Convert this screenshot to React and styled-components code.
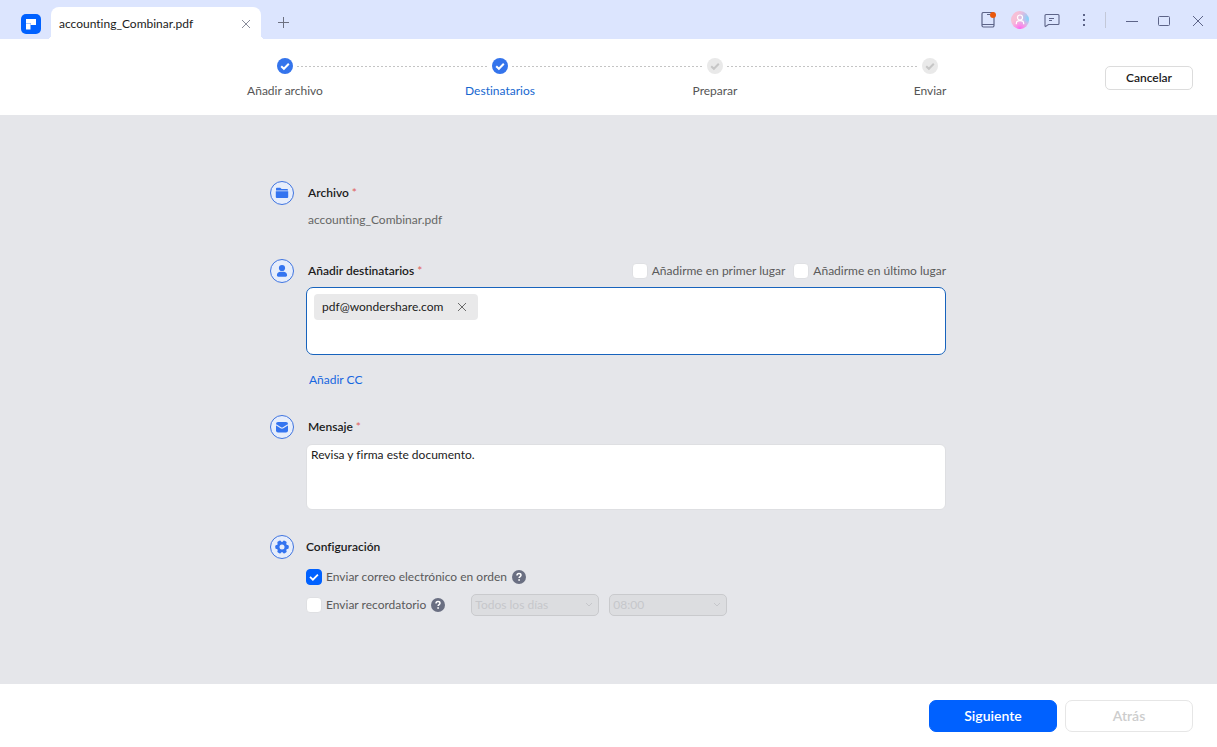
import React, { useState } from "react";
import styled, { createGlobalStyle, css } from "styled-components";

const GlobalStyle = createGlobalStyle`
  *, *::before, *::after { box-sizing: border-box; }
  body {
    margin: 0;
    font-family: Lato, "Open Sans", sans-serif;
    font-size: 12px;
    font-variant-ligatures: none;
    line-height: 18px;
    color: #1b1b1b;
  }
  button, input, textarea, select { font: inherit; font-variant-ligatures: none; color: inherit; }
  svg { display: block; }
`;

const Page = styled.div`
  min-height: 100vh;
  display: flex;
  flex-direction: column;
  background: #e5e6ea;
`;

/* ---------- title bar ---------- */

const TitleBar = styled.header`
  display: flex;
  align-items: flex-end;
  height: 39px;
  padding-left: 21px;
  padding-right: 4px;
  background: #dce5fe;
`;

const Logo = styled.svg`
  flex: none;
  width: 20px;
  height: 20px;
  margin: 0 10px 5px 0;
`;

const Tab = styled.div`
  position: relative;
  display: flex;
  align-items: center;
  justify-content: space-between;
  width: 210px;
  height: 32px;
  padding: 1px 10px 0 8px;
  border-radius: 8px 8px 0 0;
  background: #fff;

  &::before,
  &::after {
    content: "";
    position: absolute;
    bottom: 0;
    width: 4px;
    height: 4px;
  }
  &::before {
    right: 100%;
    background: radial-gradient(circle at 0 0, transparent 4px, #fff 4px);
  }
  &::after {
    left: 100%;
    background: radial-gradient(circle at 100% 0, transparent 4px, #fff 4px);
  }
`;

const PlainButton = styled.button`
  display: grid;
  place-items: center;
  padding: 0;
  border: 0;
  background: none;
  cursor: pointer;
`;

const TabClose = styled(PlainButton)`
  width: 10px;
  height: 10px;
  color: #8a8d9a;
`;

const NewTab = styled(PlainButton)`
  width: 24px;
  height: 32px;
  margin-left: 10px;
  color: #6c7080;
`;

const WindowTools = styled.div`
  display: flex;
  align-items: center;
  height: 38px;
  margin-left: auto;
  color: #5d6488;
`;

const ToolButton = styled(PlainButton)`
  width: 32px;
  height: 32px;
`;

const Divider = styled.span`
  width: 1px;
  height: 16px;
  margin: 0 11px 0 5px;
  background: #c3c8d8;
`;

/* ---------- stepper ---------- */

const StepBar = styled.nav`
  display: grid;
  grid-template-columns: 1fr auto 1fr;
  height: 76px;
  padding: 0 24px 0 22px;
  background: #fff;
`;

const Steps = styled.ol`
  grid-column: 2;
  display: flex;
  margin: 0;
  padding: 19px 0 0;
  list-style: none;
`;

const Step = styled.li`
  display: flex;
  flex-direction: column;
  align-items: center;
  gap: 8px;
  width: 80px;
  white-space: nowrap;
  color: ${(p) => (p.$current ? "#1767cf" : "#555")};
`;

const StepLine = styled.li`
  width: 191px;
  height: 1px;
  margin: 8px -28px 0;
  background: repeating-linear-gradient(90deg, #c4c4c4 0 2px, transparent 2px 4px);
`;

const CancelButton = styled.button`
  justify-self: end;
  width: 88px;
  height: 24px;
  margin-top: 27px;
  padding: 0;
  border: 1px solid #dcdcdc;
  border-radius: 5px;
  background: #fff;
  font-weight: 600;
`;

/* ---------- form ---------- */

const Main = styled.main`
  flex: 1;
  padding: 66px 25px 40px 24px;
`;

const Form = styled.form`
  max-width: 676px;
  margin: 0 auto;
`;

const Section = styled.section`
  display: grid;
  grid-template-columns: 24px minmax(0, 1fr);
  column-gap: 12px;
  margin-bottom: ${(p) => p.$space || 0}px;
`;

const Badge = styled.span`
  display: grid;
  place-items: center;
  width: 24px;
  height: 24px;
  border: 1px solid #3f74e0;
  border-radius: 50%;
  background: #e6edfb;
  color: #3474f0;
`;

const SectionHead = styled.div`
  display: flex;
  align-items: center;
  justify-content: space-between;
  height: 24px;
  padding-left: ${(p) => (p.$flush ? 0 : 2)}px;
`;

const Title = styled.h2`
  margin: 0;
  font-size: 12px;
  font-weight: 600;
`;

const Required = styled.span`
  font-weight: 400;
  color: #e0605c;
`;

const FileName = styled.p`
  margin: 6px 0 0 2px;
  color: #666;
`;

const CheckGroup = styled.div`
  display: flex;
  gap: 8px;
`;

const CheckLabel = styled.label`
  display: flex;
  align-items: center;
  gap: 4px;
  color: #5a5a5a;
`;

const CheckBox = styled.span`
  display: grid;
  place-items: center;
  width: 16px;
  height: 16px;

  > * { grid-area: 1 / 1; }
  svg { pointer-events: none; }
`;

const CheckInput = styled.input`
  appearance: none;
  width: 16px;
  height: 16px;
  margin: 0;
  border: 1px solid #dfe0e3;
  border-radius: 4px;
  background: #fff;

  &:checked {
    border-color: #0061ff;
    background: #0061ff;
  }
`;

const fieldBox = css`
  display: block;
  width: 100%;
  background: #fff;
`;

const RecipientBox = styled.div`
  ${fieldBox}
  display: flex;
  align-items: flex-start;
  height: 68px;
  margin-top: 4px;
  padding: 6px 7px;
  border: 1px solid #1763bd;
  border-radius: 7px;
`;

const Chip = styled.span`
  display: flex;
  align-items: center;
  gap: 14px;
  height: 26px;
  padding: 0 11px 0 8px;
  border-radius: 4px;
  background: #e9e9ea;
`;

const ChipClose = styled(PlainButton)`
  width: 10px;
  height: 10px;
  color: #6a6a6a;
`;

const RecipientInput = styled.input`
  flex: 1;
  min-width: 0;
  height: 26px;
  border: 0;
  outline: 0;
  background: none;
`;

const TextLink = styled.a`
  display: inline-block;
  margin: 16px 0 0 3px;
  color: #1767e0;
  text-decoration: none;
`;

const Message = styled.textarea`
  ${fieldBox}
  height: 66px;
  margin-top: 5px;
  padding: 1px 4px;
  border: 1px solid #dedfe2;
  border-radius: 6px;
  outline: 0;
  resize: none;
`;

const Option = styled.div`
  display: flex;
  align-items: center;
  height: 22px;
  margin-top: ${(p) => (p.$first ? 7 : 6)}px;
`;

const HelpButton = styled(PlainButton)`
  width: 14px;
  height: 14px;
  margin-left: 5px;
`;

const Selects = styled.div`
  display: flex;
  gap: 10px;
  margin-left: 26px;
`;

const SelectWrap = styled.div`
  display: grid;
  align-items: center;
  width: ${(p) => p.$width}px;
  color: #c6c7cb;

  > * { grid-area: 1 / 1; }
  svg { justify-self: end; margin-right: 6px; pointer-events: none; }
`;

const Select = styled.select`
  appearance: none;
  width: 100%;
  height: 22px;
  padding: 0 20px 0 3px;
  border: 1px solid #c9cacd;
  border-radius: 5px;
  background: #dcdde0;
  line-height: 18px;
  opacity: 1;
`;

/* ---------- footer ---------- */

const Footer = styled.footer`
  display: flex;
  justify-content: flex-end;
  gap: 8px;
  padding: 16px 24px 15px;
  background: #fff;
`;

const FooterButton = styled.button`
  width: 128px;
  height: 32px;
  padding: 0;
  border: 1px solid ${(p) => (p.$primary ? "#0061ff" : "#e6e6e6")};
  border-radius: 7px;
  background: ${(p) => (p.$primary ? "#0061ff" : "#fff")};
  color: ${(p) => (p.$primary ? "#fff" : "#cdcdcd")};
  font-size: 14px;
  font-weight: 600;
`;

/* ---------- drawings ---------- */

const Cross = () => (
  <svg width="10" height="10" viewBox="0 0 10 10" fill="none" stroke="currentColor">
    <path d="M1 1l8 8M9 1L1 9" />
  </svg>
);

const StepMark = ({ done }) => (
  <svg width="16" height="16" viewBox="0 0 16 16" fill="none">
    <circle cx="8" cy="8" r="8" fill={done ? "#3474ec" : "#e9e9e9"} />
    <path d="M4.200 8.200l2.700 2.600 4.900-5" stroke={done ? "#fff" : "#c6c6c6"} strokeWidth="2" />
  </svg>
);

const HelpMark = () => (
  <svg width="14" height="14" viewBox="0 0 14 14" fill="none">
    <circle cx="7" cy="7" r="7" fill="#6a6f82" />
    <path d="M5 5.500c0-1.200.9-1.900 2-1.900s2 .7 2 1.700c0 1.300-1.900 1.400-1.900 2.800" stroke="#fff" strokeWidth="1.500" />
    <rect x="6.300" y="9.200" width="1.600" height="1.600" fill="#fff" />
  </svg>
);

const Chevron = () => (
  <svg width="8" height="6" viewBox="0 0 8 6" fill="none" stroke="currentColor">
    <path d="M1 1l3 3 3-3" />
  </svg>
);

const FolderIcon = () => (
  <svg width="14" height="12" viewBox="0 0 14 12" fill="currentColor">
    <path d="M1 3.400V1.600A.9.9 0 0 1 1.900.7h3.300l1.400 1.300h5.500a.9.9 0 0 1 .9.9v.5z" />
    <path d="M.8 4.300h12.400v5.800a.9.9 0 0 1-.9.9H1.700a.9.9 0 0 1-.9-.9z" />
  </svg>
);

const PersonIcon = () => (
  <svg width="12" height="14" viewBox="0 0 12 14" fill="currentColor">
    <circle cx="6" cy="4" r="3.100" />
    <path d="M.9 11.300c0-2 1.600-3.500 3.600-3.500h3c2 0 3.600 1.500 3.600 3.500 0 .8-.6 1.400-1.400 1.400H2.300c-.8 0-1.400-.6-1.400-1.400z" />
  </svg>
);

const MailIcon = () => (
  <svg width="14" height="12" viewBox="0 0 14 12" fill="none">
    <rect x="1" y="1" width="12" height="10.500" rx="2" fill="currentColor" />
    <path d="M1 3.800l4.800 2.900c.8.500 1.600.5 2.400 0L13 3.800" stroke="#e6edfb" strokeWidth="1.100" />
  </svg>
);

const GearIcon = () => {
  const teeth = [0, 60, 120];
  return (
    <svg width="14" height="14" viewBox="0 0 14 14">
      {teeth.map((angle) => (
        <rect key={angle} x="0.300" y="5" width="13.400" height="4" rx="1.200" fill="currentColor" transform={`rotate(${angle} 7 7)`} />
      ))}
      <circle cx="7" cy="7" r="5.300" fill="currentColor" />
      <circle cx="7" cy="7" r="2.500" fill="#e6edfb" />
    </svg>
  );
};

function Check({ label, defaultChecked = false }) {
  const [checked, setChecked] = useState(defaultChecked);
  return (
    <CheckLabel>
      <CheckBox>
        <CheckInput type="checkbox" checked={checked} onChange={(e) => setChecked(e.target.checked)} />
        {checked && (
          <svg width="16" height="16" viewBox="0 0 16 16" fill="none" stroke="#fff" strokeWidth="1.800">
            <path d="M4 7.900l2.900 2.800 5-5.100" />
          </svg>
        )}
      </CheckBox>
      {label}
    </CheckLabel>
  );
}

function Dropdown({ label, value, width }) {
  return (
    <SelectWrap $width={width}>
      <Select aria-label={label} disabled defaultValue={value}>
        <option value={value}>{value}</option>
      </Select>
      <Chevron />
    </SelectWrap>
  );
}

const STEPS = [
  { label: "Añadir archivo", done: true },
  { label: "Destinatarios", done: true, current: true },
  { label: "Preparar" },
  { label: "Enviar" },
];

export default function App() {
  return (
    <Page>
      <GlobalStyle />

      <TitleBar>
        <Logo viewBox="0 0 20 20">
          <rect width="20" height="20" rx="5" fill="#0061ff" />
          <path d="M5 5h10v6H9.500V9H5z" fill="#fff" />
          <path d="M5 10h4.500v5.500H5z" fill="#fff" />
          <path d="M5 9h4.500v1H5z" fill="#a9c8ff" />
        </Logo>
        <Tab>
          <span>accounting_Combinar.pdf</span>
          <TabClose type="button" aria-label="Cerrar pestaña">
            <Cross />
          </TabClose>
        </Tab>
        <NewTab type="button" aria-label="Nueva pestaña">
          <svg width="12" height="12" viewBox="0 0 12 12" fill="none" stroke="currentColor">
            <path d="M6.500 0v11M1 5.500h11" />
          </svg>
        </NewTab>

        <WindowTools>
          <ToolButton type="button" aria-label="Novedades">
            <svg width="16" height="16" viewBox="0 0 16 16" fill="none">
              <path d="M3.500 .500h9a1.500 1.500 0 0 1 1.500 1.500v11.500a1.500 1.500 0 0 1-1.500 1.500h-9A1.500 1.500 0 0 1 2 13.500V2A1.500 1.500 0 0 1 3.500 .500zM2 12.500h12" stroke="currentColor" strokeWidth="1.200" />
              <path d="M7 2.500h3" stroke="currentColor" />
              <circle cx="13" cy="3" r="3" fill="#ea580c" />
            </svg>
          </ToolButton>
          <ToolButton type="button" aria-label="Cuenta">
            <svg width="18" height="18" viewBox="0 0 18 18" fill="none">
              <defs>
                <radialGradient id="sky" cx="1" cy="0.400" r="0.700">
                  <stop offset="0" stopColor="#6fdcff" />
                  <stop offset="1" stopColor="#c9a9f5" stopOpacity="0" />
                </radialGradient>
                <radialGradient id="rose" cx="0.500" cy="1" r="0.600">
                  <stop offset="0" stopColor="#ff5cf5" />
                  <stop offset="1" stopColor="#f59fe6" stopOpacity="0" />
                </radialGradient>
              </defs>
              <circle cx="9" cy="9" r="9" fill="#f7bfd6" />
              <circle cx="9" cy="9" r="9" fill="url(#sky)" />
              <circle cx="9" cy="9" r="9" fill="url(#rose)" />
              <circle cx="9" cy="6.500" r="2.500" stroke="#fff" strokeWidth="1.200" />
              <path d="M5.300 13.300v-.8c0-1.500 1.600-2.800 3.700-2.800s3.700 1.300 3.700 2.800v.8" stroke="#fff" strokeWidth="1.200" />
            </svg>
          </ToolButton>
          <ToolButton type="button" aria-label="Comentarios">
            <svg width="16" height="16" viewBox="0 0 16 16" fill="none" stroke="currentColor" strokeWidth="1.100">
              <path d="M2 2.500h12a1 1 0 0 1 1 1v8a1 1 0 0 1-1 1H4.500L1.500 14.500 1 14V3.500a1 1 0 0 1 1-1zM5 6.500h5M5 8.500h3" />
            </svg>
          </ToolButton>
          <ToolButton type="button" aria-label="Más">
            <svg width="4" height="16" viewBox="0 0 4 16" fill="currentColor">
              <rect x="1" y="2" width="2" height="2" />
              <rect x="1" y="7" width="2" height="2" />
              <rect x="1" y="12" width="2" height="2" />
            </svg>
          </ToolButton>
          <Divider />
          <ToolButton type="button" aria-label="Minimizar">
            <svg width="14" height="14" viewBox="0 0 14 14" stroke="currentColor">
              <path d="M0 8.500h12" />
            </svg>
          </ToolButton>
          <ToolButton type="button" aria-label="Maximizar">
            <svg width="14" height="14" viewBox="0 0 14 14" fill="none" stroke="currentColor">
              <rect x="0.500" y="3.500" width="11" height="9" rx="1" />
            </svg>
          </ToolButton>
          <ToolButton type="button" aria-label="Cerrar">
            <svg width="14" height="14" viewBox="0 0 14 14" stroke="currentColor">
              <path d="M3 3l10 10M13 3L3 13" />
            </svg>
          </ToolButton>
        </WindowTools>
      </TitleBar>

      <StepBar aria-label="Progreso">
        <Steps>
          {STEPS.map((step, i) => (
            <React.Fragment key={step.label}>
              {i > 0 && <StepLine aria-hidden="true" />}
              <Step $current={step.current} aria-current={step.current ? "step" : undefined}>
                <StepMark done={step.done} />
                {step.label}
              </Step>
            </React.Fragment>
          ))}
        </Steps>
        <CancelButton type="button">Cancelar</CancelButton>
      </StepBar>

      <Main>
        <Form id="sign-form" onSubmit={(e) => e.preventDefault()}>
          <Section $space={30}>
            <Badge><FolderIcon /></Badge>
            <div>
              <SectionHead>
                <Title>Archivo <Required>*</Required></Title>
              </SectionHead>
              <FileName>accounting_Combinar.pdf</FileName>
            </div>
          </Section>

          <Section $space={26}>
            <Badge><PersonIcon /></Badge>
            <div>
              <SectionHead>
                <Title><label htmlFor="recipients">Añadir destinatarios</label> <Required>*</Required></Title>
                <CheckGroup>
                  <Check label="Añadirme en primer lugar" />
                  <Check label="Añadirme en último lugar" />
                </CheckGroup>
              </SectionHead>
              <RecipientBox>
                <Chip>
                  pdf@wondershare.com
                  <ChipClose type="button" aria-label="Quitar">
                    <Cross />
                  </ChipClose>
                </Chip>
                <RecipientInput id="recipients" type="text" />
              </RecipientBox>
              <TextLink href="#cc">Añadir CC</TextLink>
            </div>
          </Section>

          <Section $space={25}>
            <Badge><MailIcon /></Badge>
            <div>
              <SectionHead>
                <Title><label htmlFor="message">Mensaje</label> <Required>*</Required></Title>
              </SectionHead>
              <Message id="message" defaultValue="Revisa y firma este documento." />
            </div>
          </Section>

          <Section>
            <Badge><GearIcon /></Badge>
            <div>
              <SectionHead $flush>
                <Title>Configuración</Title>
              </SectionHead>
              <Option $first>
                <Check label="Enviar correo electrónico en orden" defaultChecked />
                <HelpButton type="button" aria-label="Ayuda"><HelpMark /></HelpButton>
              </Option>
              <Option>
                <Check label="Enviar recordatorio" />
                <HelpButton type="button" aria-label="Ayuda"><HelpMark /></HelpButton>
                <Selects>
                  <Dropdown label="Frecuencia" value="Todos los días" width={128} />
                  <Dropdown label="Hora" value="08:00" width={118} />
                </Selects>
              </Option>
            </div>
          </Section>
        </Form>
      </Main>

      <Footer>
        <FooterButton type="submit" form="sign-form" $primary>Siguiente</FooterButton>
        <FooterButton type="button" disabled>Atrás</FooterButton>
      </Footer>
    </Page>
  );
}
